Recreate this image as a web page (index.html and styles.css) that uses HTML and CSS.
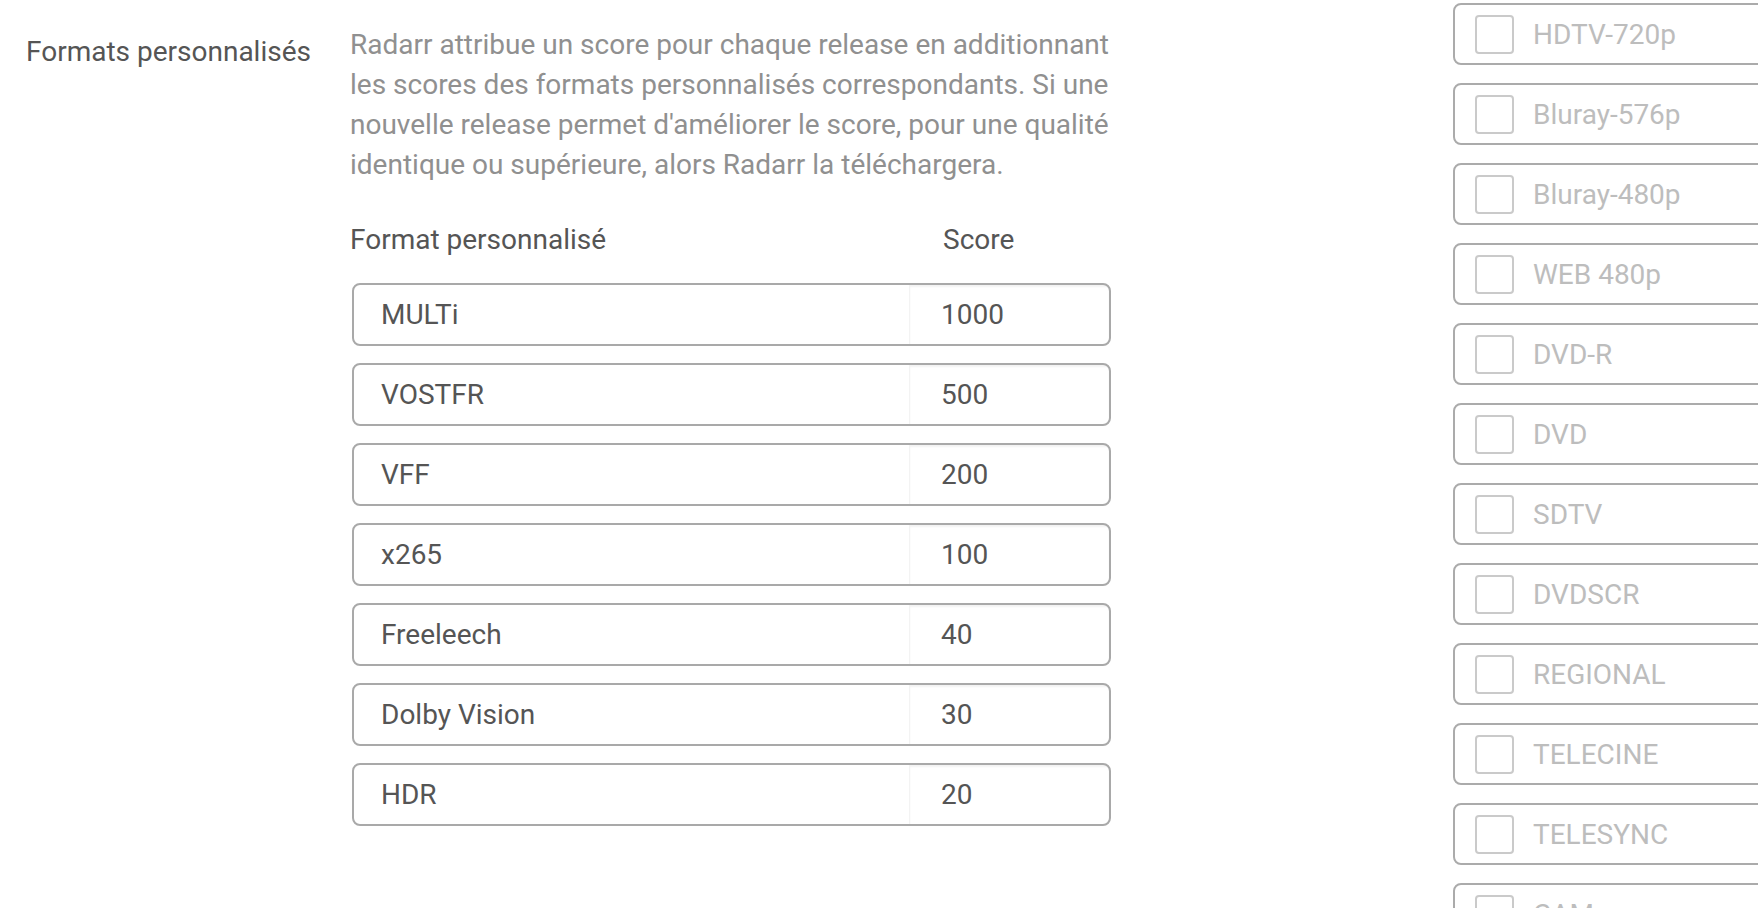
FILE: index.html
```html
<!DOCTYPE html>
<html lang="fr">
<head>
<meta charset="utf-8">
<title>Formats personnalisés</title>
<link rel="stylesheet" href="styles.css">
</head>
<body>
<div class="page">
  <section class="group">
    <div class="label">Formats personnalisés</div>
    <div class="content">
      <p class="help">Radarr attribue un score pour chaque release en additionnant les scores des formats personnalisés correspondants. Si une nouvelle release permet d'améliorer le score, pour une qualité identique ou supérieure, alors Radarr la téléchargera.</p>
      <div class="table-head">
        <span class="head-name">Format personnalisé</span>
        <span class="head-score">Score</span>
      </div>
      <ul class="rows">
        <li class="row"><span class="name">MULTi</span><span class="score">1000</span></li>
        <li class="row"><span class="name">VOSTFR</span><span class="score">500</span></li>
        <li class="row"><span class="name">VFF</span><span class="score">200</span></li>
        <li class="row"><span class="name">x265</span><span class="score">100</span></li>
        <li class="row"><span class="name">Freeleech</span><span class="score">40</span></li>
        <li class="row"><span class="name">Dolby Vision</span><span class="score">30</span></li>
        <li class="row"><span class="name">HDR</span><span class="score">20</span></li>
      </ul>
    </div>
  </section>
  <ul class="qualities">
    <li class="quality"><span class="check"></span><span class="qname">HDTV-720p</span></li>
    <li class="quality"><span class="check"></span><span class="qname">Bluray-576p</span></li>
    <li class="quality"><span class="check"></span><span class="qname">Bluray-480p</span></li>
    <li class="quality"><span class="check"></span><span class="qname">WEB 480p</span></li>
    <li class="quality"><span class="check"></span><span class="qname">DVD-R</span></li>
    <li class="quality"><span class="check"></span><span class="qname">DVD</span></li>
    <li class="quality"><span class="check"></span><span class="qname">SDTV</span></li>
    <li class="quality"><span class="check"></span><span class="qname">DVDSCR</span></li>
    <li class="quality"><span class="check"></span><span class="qname">REGIONAL</span></li>
    <li class="quality"><span class="check"></span><span class="qname">TELECINE</span></li>
    <li class="quality"><span class="check"></span><span class="qname">TELESYNC</span></li>
    <li class="quality"><span class="check"></span><span class="qname">CAM</span></li>
  </ul>
</div>
</body>
</html>
```

FILE: styles.css
```css
html, body {
  margin: 0;
  padding: 0;
  background: #ffffff;
}

body {
  width: 1758px;
  height: 908px;
  overflow: hidden;
  font-family: Roboto, "Liberation Sans", sans-serif;
  font-size: 28px;
  line-height: 40px;
  color: #555555;
}

.page {
  display: flex;
  align-items: flex-start;
}

.group {
  display: flex;
  flex: none;
  width: 1111px;
  padding-top: 25px;
}

.label {
  flex: none;
  width: 324px;
  margin-left: 26px;
  margin-top: 7px;
  color: #555555;
}

.content {
  flex: none;
  width: 761px;
}

.help {
  margin: 0 0 35px 0;
  color: #909090;
}

.table-head {
  display: flex;
  color: #555555;
}

.head-name {
  flex: none;
  width: 560px;
}

.head-score {
  padding-left: 33px;
}

.rows {
  list-style: none;
  margin: 23px 0 0 2px;
  padding: 0;
}

.row {
  display: flex;
  align-items: stretch;
  box-sizing: border-box;
  height: 63px;
  margin-bottom: 17px;
  border: 2px solid #a9a9a9;
  border-radius: 8px;
  overflow: hidden;
  line-height: normal;
}

.name {
  flex: 1;
  display: flex;
  align-items: center;
  padding-left: 27px;
  color: #555555;
}

.score {
  flex: none;
  box-sizing: border-box;
  width: 200px;
  display: flex;
  align-items: center;
  padding-left: 31px;
  border-left: 1px solid #f3f3f3;
  box-shadow: inset 0 2px 2px rgba(0, 0, 0, 0.05);
  color: #555555;
}

.qualities {
  flex: none;
  list-style: none;
  margin: 3px 0 0 342px;
  padding: 0;
  width: 420px;
}

.quality {
  display: flex;
  align-items: center;
  gap: 19px;
  box-sizing: border-box;
  height: 62px;
  margin-bottom: 18px;
  padding-left: 20px;
  border: 2px solid #ababab;
  border-radius: 8px;
  line-height: normal;
}

.check {
  flex: none;
  box-sizing: border-box;
  width: 39px;
  height: 39px;
  border: 2px solid #cacaca;
  border-radius: 4px;
  background: #ffffff;
}

.qname {
  color: #bdbdbd;
}
```
